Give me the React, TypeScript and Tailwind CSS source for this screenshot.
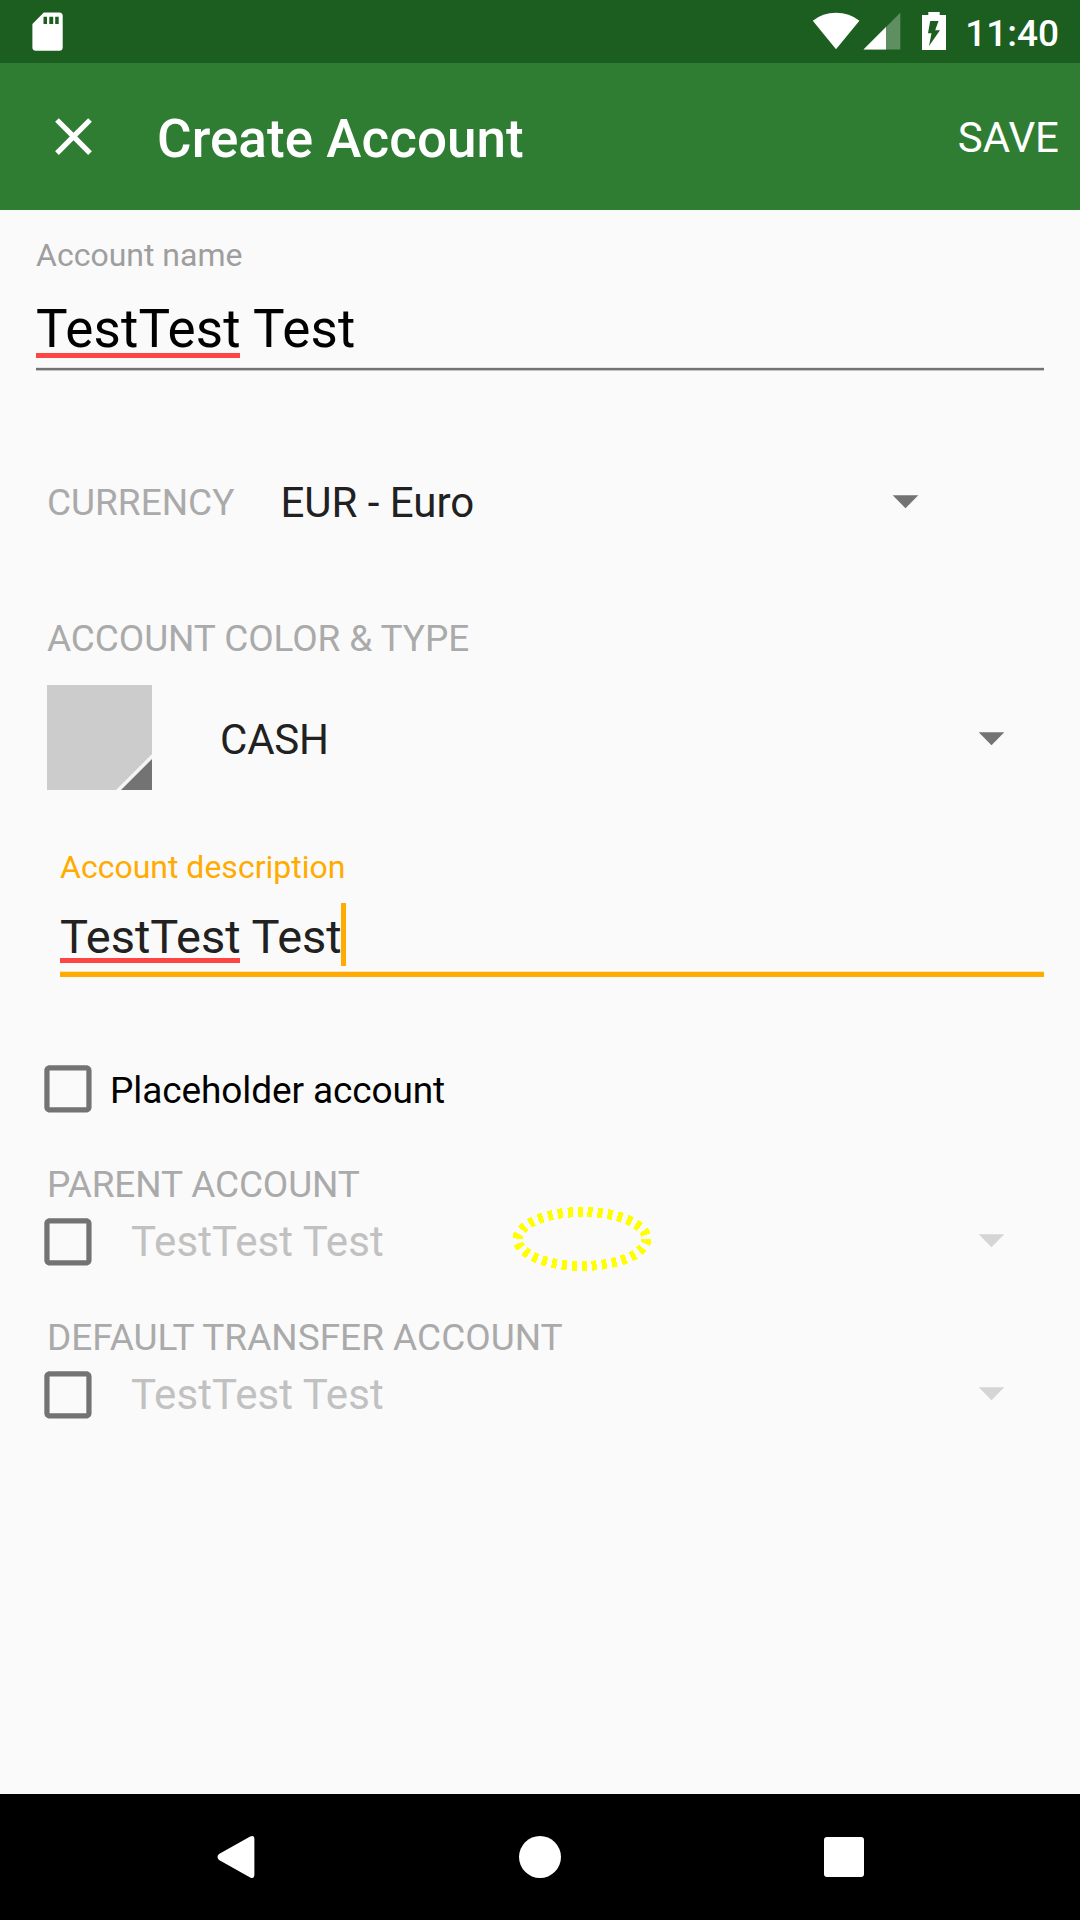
import type { ReactNode } from "react";

const CAPTION = "whitespace-pre text-[37px] leading-[44px] text-[#aaaaaa]";

function Caret({ color, className = "" }: { color: string; className?: string }) {
  return (
    <svg className={`block h-[14px] w-[27px] shrink-0 ${className}`} viewBox="0 0 27 14">
      <path d="M0.700 0.300H26.300L13.500 13.200Z" fill={color} />
    </svg>
  );
}

function Checkbox() {
  return (
    <svg className="block size-[63px] shrink-0" viewBox="-0.17 -0.17 24 24" fill="#737373">
      <path d="M19 5v14H5V5h14m0-2H5c-1.100 0-2 .9-2 2v14c0 1.100.9 2 2 2h14c1.100 0 2-.9 2-2V5c0-1.100-.9-2-2-2z" />
    </svg>
  );
}

function Misspelled({ children, bar }: { children: ReactNode; bar: string }) {
  return (
    <span className="relative inline-block">
      {children}
      <span className={`absolute left-0 h-[5px] bg-[#ff4444] ${bar}`} />
    </span>
  );
}

function StatusBar() {
  return (
    <div className="flex h-[63px] items-start bg-[#1b5e20] pl-8 pr-[21px] text-white">
      <svg className="mt-3 block h-[39px] w-[31px]" viewBox="0 0 31 39">
        <path
          fillRule="evenodd"
          fill="#fff"
          d="M11.800.6H27.200Q30.700.6 30.700 4.100V35.200Q30.700 38.700 27.200 38.700H3.900Q.4 38.700.4 35.200V12ZM11.500 4.700V12H15V4.700ZM17.300 4.700V12H21.200V4.700ZM23.200 4.700V12H26.700V4.700Z"
        />
      </svg>
      <svg className="ml-auto mt-3 block h-[38px] w-[48px]" viewBox="0 0 48 38">
        <path fill="#fff" d="M.8 8.700Q10.500.7 24 .7T47.400 8.700L24 37.300Z" />
      </svg>
      <svg className="ml-[3px] mt-3 block h-[38px] w-[38px]" viewBox="0 0 38 38">
        <path fill="#fff" fillOpacity=".3" d="M37.300.7V37.500H.5Z" />
        <path fill="#fff" d="M23 15V37.500H.5Z" />
      </svg>
      <svg className="ml-[21px] mt-3 block h-[38px] w-[24px]" viewBox="0 0 24 38">
        <path
          fillRule="evenodd"
          fill="#fff"
          d="M6.300 0H17.700V3H24V38H0V3H6.300ZM8.200 9H16.500L13.200 18.200H18L7 34L9.500 21.200H6Z"
        />
      </svg>
      <span className="ml-[19px] mt-3 text-[37px] font-medium leading-[44px]">11:40</span>
    </div>
  );
}

function AppBar() {
  return (
    <header className="flex h-[147px] items-center bg-[#2e7d32] pl-[42px] pr-[21px] text-white">
      <svg className="block size-[63px]" viewBox="0 0 24 24" fill="#fff">
        <path d="M19 6.410L17.590 5 12 10.590 6.410 5 5 6.410 10.590 12 5 17.590 6.410 19 12 13.410 17.590 19 19 17.590 13.410 12z" />
      </svg>
      <h1 className="ml-[52px] mt-[5px] text-[53px] font-medium leading-[62px] tracking-[0.04px]">Create Account</h1>
      <span className="ml-auto mt-[2px] text-[42px] leading-[50px]">SAVE</span>
    </header>
  );
}

function LinkedAccount({ title, tracking = "" }: { title: string; tracking?: string }) {
  return (
    <section className="h-[153px]">
      <div className={`ml-[47px] ${CAPTION} ${tracking}`}>{title}</div>
      <div className="mt-[3px] flex h-[63px] items-center pl-[36px] pr-[75px]">
        <Checkbox />
        <span className="ml-[32px] text-[42px] leading-[50px] tracking-[0.08px] text-[#c1c1c1]">TestTest Test</span>
        <Caret color="#d5d5d5" className="-mt-px ml-auto" />
      </div>
    </section>
  );
}

function FocusRing() {
  return (
    <svg className="absolute left-[510px] top-[1205px] block h-[68px] w-[144px]" viewBox="0 0 144 68">
      <ellipse
        cx="72"
        cy="34"
        rx="64.500"
        ry="27"
        fill="none"
        stroke="#ffff00"
        strokeWidth="10"
        strokeDasharray="5 5"
        shapeRendering="crispEdges"
      />
    </svg>
  );
}

export default function App() {
  return (
    <div className="relative flex h-[1920px] w-[1080px] flex-col overflow-hidden bg-[#fafafa] font-['Roboto',sans-serif]">
      <StatusBar />
      <AppBar />
      <main className="flex flex-1 flex-col pt-[25px]">
        <section className="ml-9 mr-9">
          <div className="text-[32px] leading-[40px] text-[#9e9e9e]">Account name</div>
          <div className="mt-[23px] h-[62px] text-[53px] leading-[62px] tracking-[0.14px] text-black">
            <Misspelled bar="top-[55px] w-[204px]">TestTest</Misspelled> Test
          </div>
          <div className="mt-[7px] h-[4px] border-b border-t border-b-[#c4c4c4] border-t-[#e4e4e4] bg-[#737373]" />
        </section>

        <section className="mt-[107px] flex h-[50px] items-center pl-[47px] pr-[161px]">
          <span className={CAPTION}>CURRENCY</span>
          <span className="ml-[46px] text-[42px] leading-[50px] text-[#212121]">EUR - Euro</span>
          <Caret color="#737373" className="-mt-[2px] ml-auto" />
        </section>

        <section className="mt-[89px] pl-[47px] pr-[75px]">
          <div className={`${CAPTION} tracking-[-0.1px]`}>ACCOUNT COLOR &amp; TYPE</div>
          <div className="mt-[24px] flex items-center">
            <svg className="block size-[105px]" viewBox="0 0 105 105">
              <path fill="#cccccc" d="M0 0H105V105H0Z" />
              <path fill="#f5f5f5" d="M105 69V105H69Z" />
              <path fill="#737373" d="M105 74V105H74Z" />
            </svg>
            <span className="ml-[68px] mt-[4px] text-[42px] leading-[50px] tracking-[-0.2px] text-[#212121]">CASH</span>
            <Caret color="#737373" className="ml-auto mt-[3px]" />
          </div>
        </section>

        <section className="ml-[60px] mr-9 mt-[57px]">
          <div className="text-[32px] leading-[40px] text-[#ffab00]">Account description</div>
          <div className="mt-[22px] flex h-[56px] text-[47px] leading-[56px] text-[#212121]">
            <span className="whitespace-pre">
              <Misspelled bar="top-[49px] w-[180px]">TestTest</Misspelled> Test
            </span>
            <span className="-ml-px -mt-[6px] h-[63px] w-[5px] bg-[#ffab00]" />
          </div>
          <div className="mt-[6px] h-[6px] border-t border-[#fbe6b9] bg-[#ffab00]" />
        </section>

        <section className="mt-[80px] flex h-[63px] items-center pl-[36px]">
          <Checkbox />
          <span className="ml-[11px] mt-[4px] text-[37px] leading-[44px] tracking-[-0.1px] text-black">Placeholder account</span>
        </section>

        <div className="mt-[43px]">
          <LinkedAccount title="PARENT ACCOUNT" tracking="tracking-[-0.15px]" />
          <LinkedAccount title="DEFAULT TRANSFER ACCOUNT" />
        </div>
      </main>

      <nav className="flex h-[126px] items-center bg-black pl-[217px]">
        <svg className="block h-[42px] w-[38px]" viewBox="0 0 38 42">
          <path
            fill="#fff"
            d="M33.200.6Q37.400-1.200 37.400 3.500V38.500Q37.400 43.200 33.200 41.400L2 24Q-1 21 2 18Z"
          />
        </svg>
        <span className="ml-[264px] size-[42px] rounded-full bg-white" />
        <span className="ml-[263px] size-[40px] rounded-[3px] bg-white" />
      </nav>
      <FocusRing />
    </div>
  );
}
